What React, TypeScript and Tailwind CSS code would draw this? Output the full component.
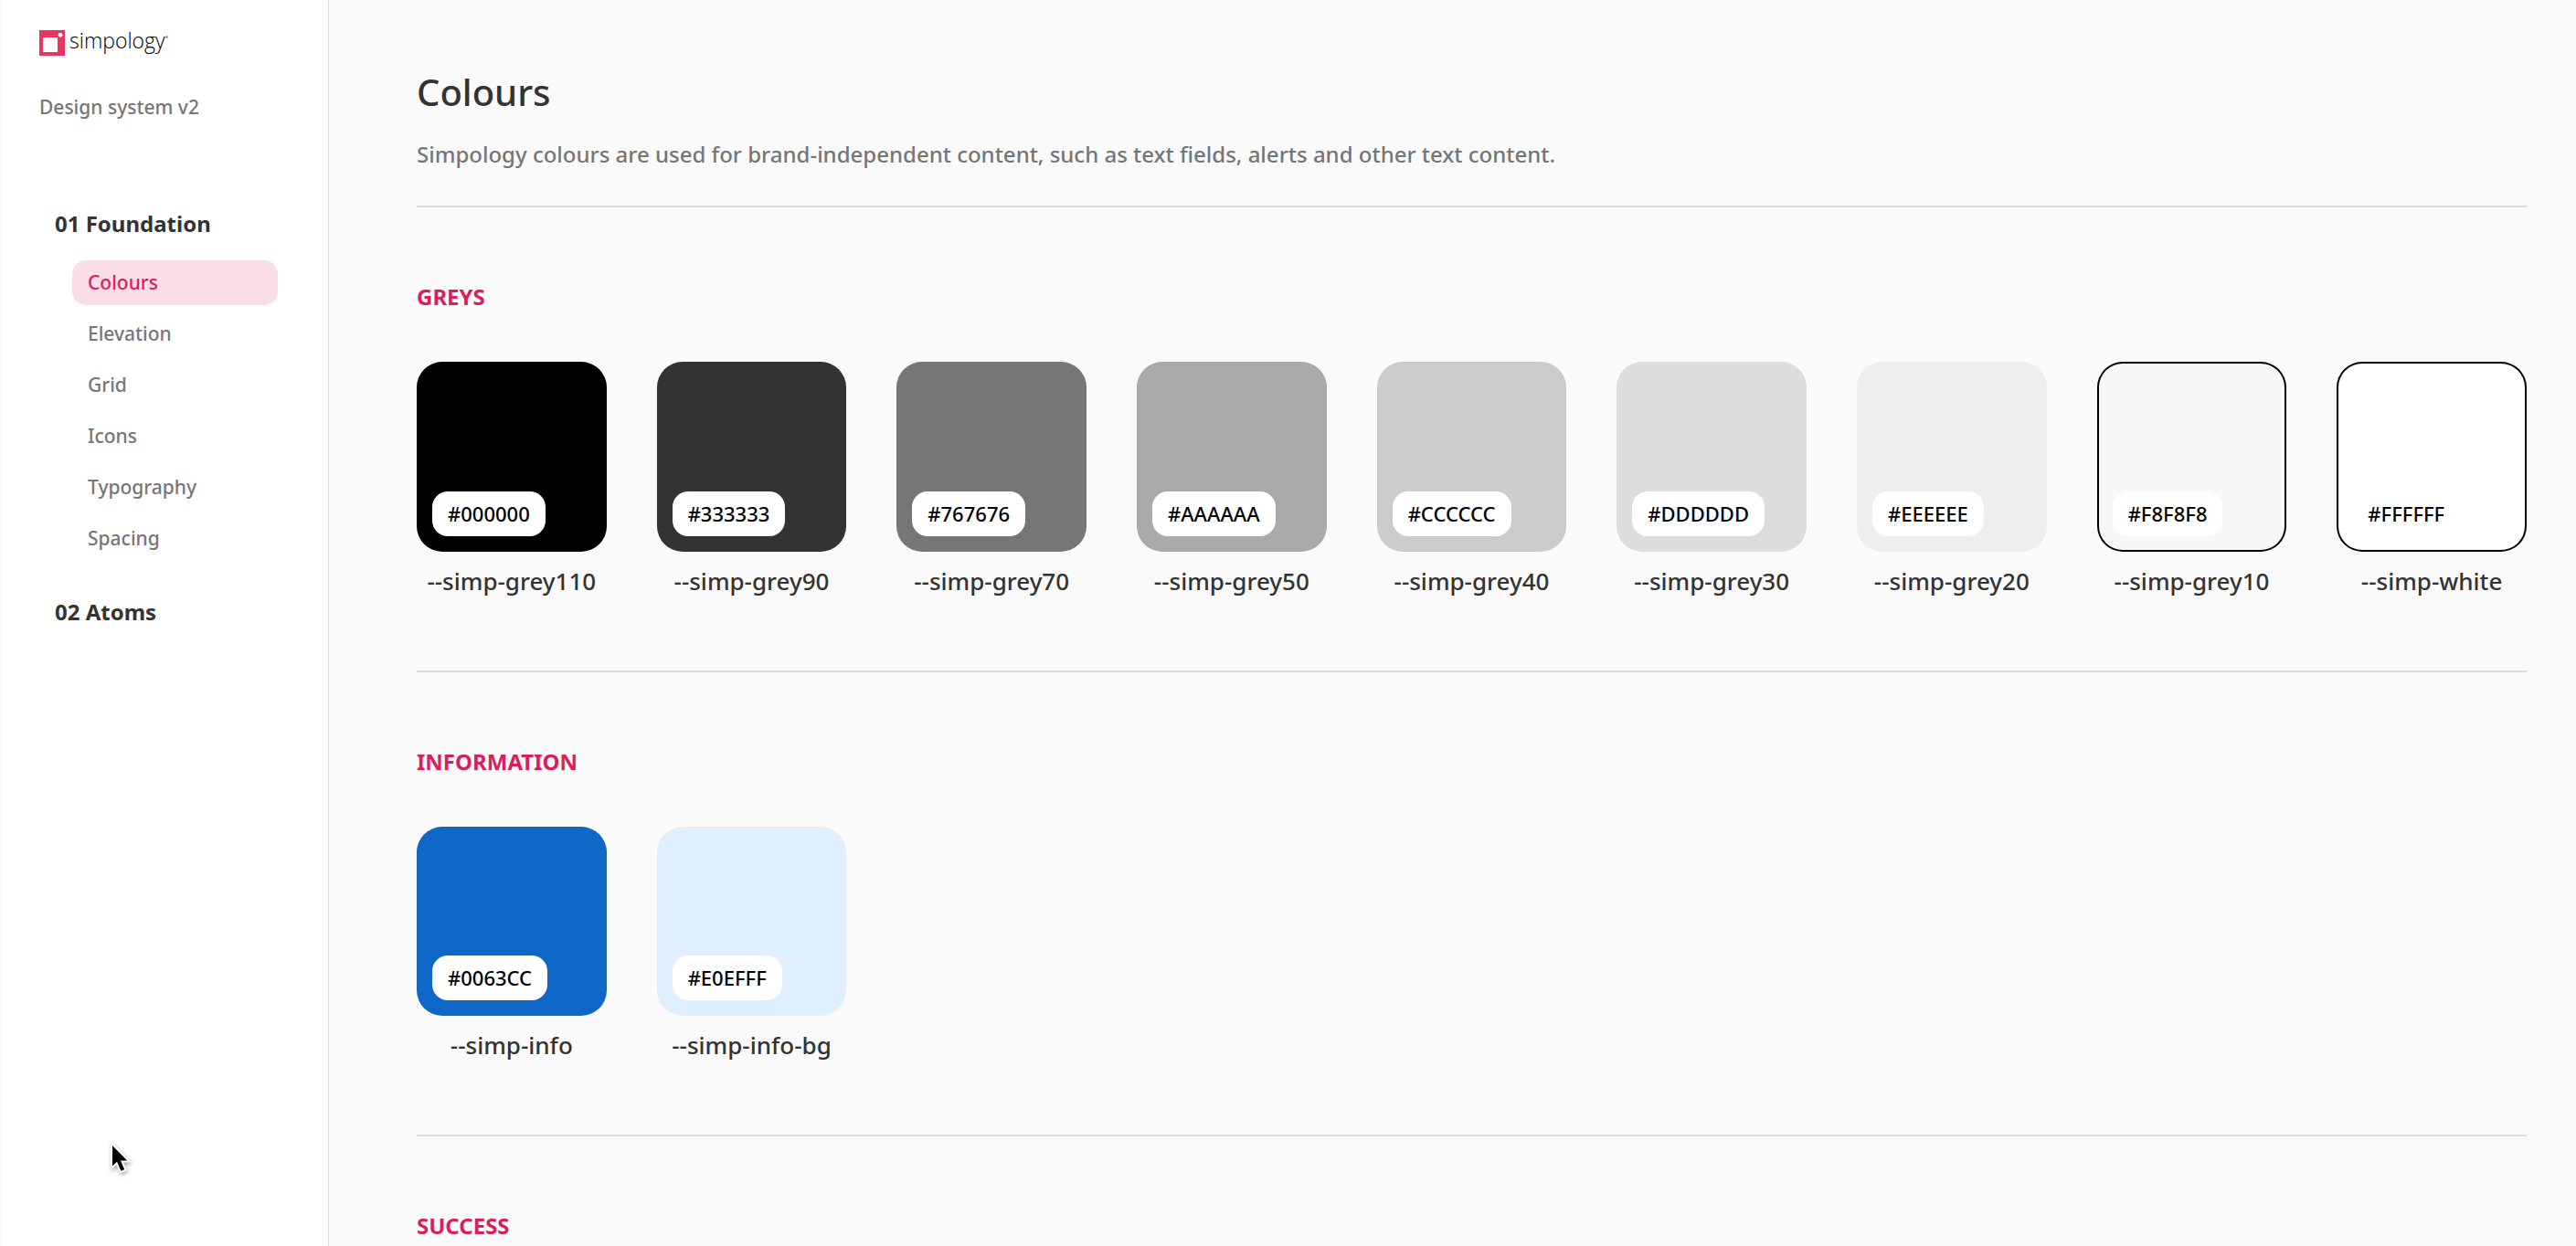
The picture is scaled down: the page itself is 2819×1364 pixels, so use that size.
type Swatch = { hex: string; name: string; fill: string; outlined?: boolean };

const greys: Swatch[] = [
  { hex: '#000000', name: '--simp-grey110', fill: 'bg-black' },
  { hex: '#333333', name: '--simp-grey90', fill: 'bg-[#333333]' },
  { hex: '#767676', name: '--simp-grey70', fill: 'bg-[#767676]' },
  { hex: '#AAAAAA', name: '--simp-grey50', fill: 'bg-[#aaaaaa]' },
  { hex: '#CCCCCC', name: '--simp-grey40', fill: 'bg-[#cccccc]' },
  { hex: '#DDDDDD', name: '--simp-grey30', fill: 'bg-[#dddddd]' },
  { hex: '#EEEEEE', name: '--simp-grey20', fill: 'bg-[#eeeeee]' },
  { hex: '#F8F8F8', name: '--simp-grey10', fill: 'bg-[#f8f8f8]', outlined: true },
  { hex: '#FFFFFF', name: '--simp-white', fill: 'bg-white', outlined: true },
];

const information: Swatch[] = [
  { hex: '#0063CC', name: '--simp-info', fill: 'bg-[#0e66c7]' },
  { hex: '#E0EFFF', name: '--simp-info-bg', fill: 'bg-[#e0effd]' },
];

const foundation = ['Colours', 'Elevation', 'Grid', 'Icons', 'Typography', 'Spacing'];

function Logo() {
  return (
    <a href="#home" aria-label="Simpology home" className="flex items-start">
      <svg viewBox="0 0 28 28" className="size-7" aria-hidden="true">
        <rect width="28" height="28" fill="#ea3560" />
        <rect x="4" y="8" width="16" height="16" fill="#fff" />
        <circle cx="23" cy="5.3" r="2.4" fill="#fff" />
      </svg>
      <span className="ml-[5px] font-['Open_Sans',sans-serif] text-[23px] leading-[22px] font-light text-black">
        simpology
      </span>
      <svg viewBox="0 0 3 12" className="h-3 w-[3px]" aria-hidden="true">
        <circle cx="1.5" cy="7.5" r="1.2" fill="#777" />
      </svg>
    </a>
  );
}

function Sidebar() {
  return (
    <aside className="w-[360px] shrink-0 border-r border-l-2 border-r-[#dddddd] border-l-[#fafafa] bg-white pt-[33px] pl-[41px]">
      <Logo />
      <p className="mt-10 text-[21px] leading-8 text-[#767676]">Design system v2</p>
      <nav className="mt-[94px] mr-[55px] ml-[17px]" aria-label="Design system">
        <h2 className="text-2xl leading-9 font-bold">01 Foundation</h2>
        <ul className="mt-[22px] ml-[19px] flex flex-col gap-[7px]">
          {foundation.map((item) => (
            <li key={item}>
              <a
                href={`#${item.toLowerCase()}`}
                aria-current={item === 'Colours' ? 'page' : undefined}
                className={
                  item === 'Colours'
                    ? 'flex h-[49px] items-center rounded-[15px] bg-[#fbdde5] pl-[17px] text-[21px] text-[#d81e5b]'
                    : 'flex h-[49px] items-center pl-[17px] text-[21px] text-[#767676]'
                }
              >
                {item}
              </a>
            </li>
          ))}
        </ul>
        <h2 className="mt-[38px] text-2xl leading-9 font-bold">02 Atoms</h2>
      </nav>
    </aside>
  );
}

function SwatchCard({ hex, name, fill, outlined }: Swatch) {
  return (
    <li>
      <div
        className={`flex aspect-square items-end rounded-[28px] p-[17px] ${fill} ${
          outlined ? 'inset-ring-2 inset-ring-black' : ''
        }`}
      >
        <span className="rounded-[17px] bg-white px-[17px] text-[22px] leading-[49px] text-black">{hex}</span>
      </div>
      <p className="mt-3.5 text-center text-[26px] leading-9 whitespace-nowrap">{name}</p>
    </li>
  );
}

function Section({ title, swatches }: { title: string; swatches: Swatch[] }) {
  return (
    <section className="border-b-2 border-[#dddddd] py-20">
      <h2 className="text-2xl leading-9 font-bold text-[#d81e5b]">{title}</h2>
      <ul className="mt-[53px] grid grid-cols-9 gap-[55px]">
        {swatches.map((s) => (
          <SwatchCard key={s.name} {...s} />
        ))}
      </ul>
    </section>
  );
}

function Pointer() {
  return (
    <svg
      viewBox="0 0 28 40"
      className="pointer-events-none absolute top-[1249px] left-[119px] h-10 w-7 drop-shadow-[1px_2px_2px_rgba(0,0,0,0.35)]"
      aria-hidden="true"
    >
      <path
        d="M4 5V27.5L9 22.8L13.4 32.8L17.2 31.2L13 21.5H20.2Z"
        fill="#000"
        stroke="#fff"
        strokeWidth="4"
        paintOrder="stroke"
      />
    </svg>
  );
}

export default function App() {
  return (
    <div className="relative flex min-h-screen bg-[#fafafa] font-['Noto_Sans',sans-serif] font-medium text-[#333333]">
      <Sidebar />
      <main className="min-w-0 flex-1 pr-[54px] pl-24">
        <header className="border-b-2 border-[#dddddd] pt-[71px] pb-[38px]">
          <h1 className="text-[40px] leading-[60px] font-medium">Colours</h1>
          <p className="mt-5 text-2xl leading-9 text-[#767676]">
            Simpology colours are used for brand-independent content, such as text fields, alerts and other text
            content.
          </p>
        </header>
        <Section title="GREYS" swatches={greys} />
        <Section title="INFORMATION" swatches={information} />
        <section className="pt-20">
          <h2 className="text-2xl leading-9 font-bold text-[#d81e5b]">SUCCESS</h2>
        </section>
      </main>
      <Pointer />
    </div>
  );
}
